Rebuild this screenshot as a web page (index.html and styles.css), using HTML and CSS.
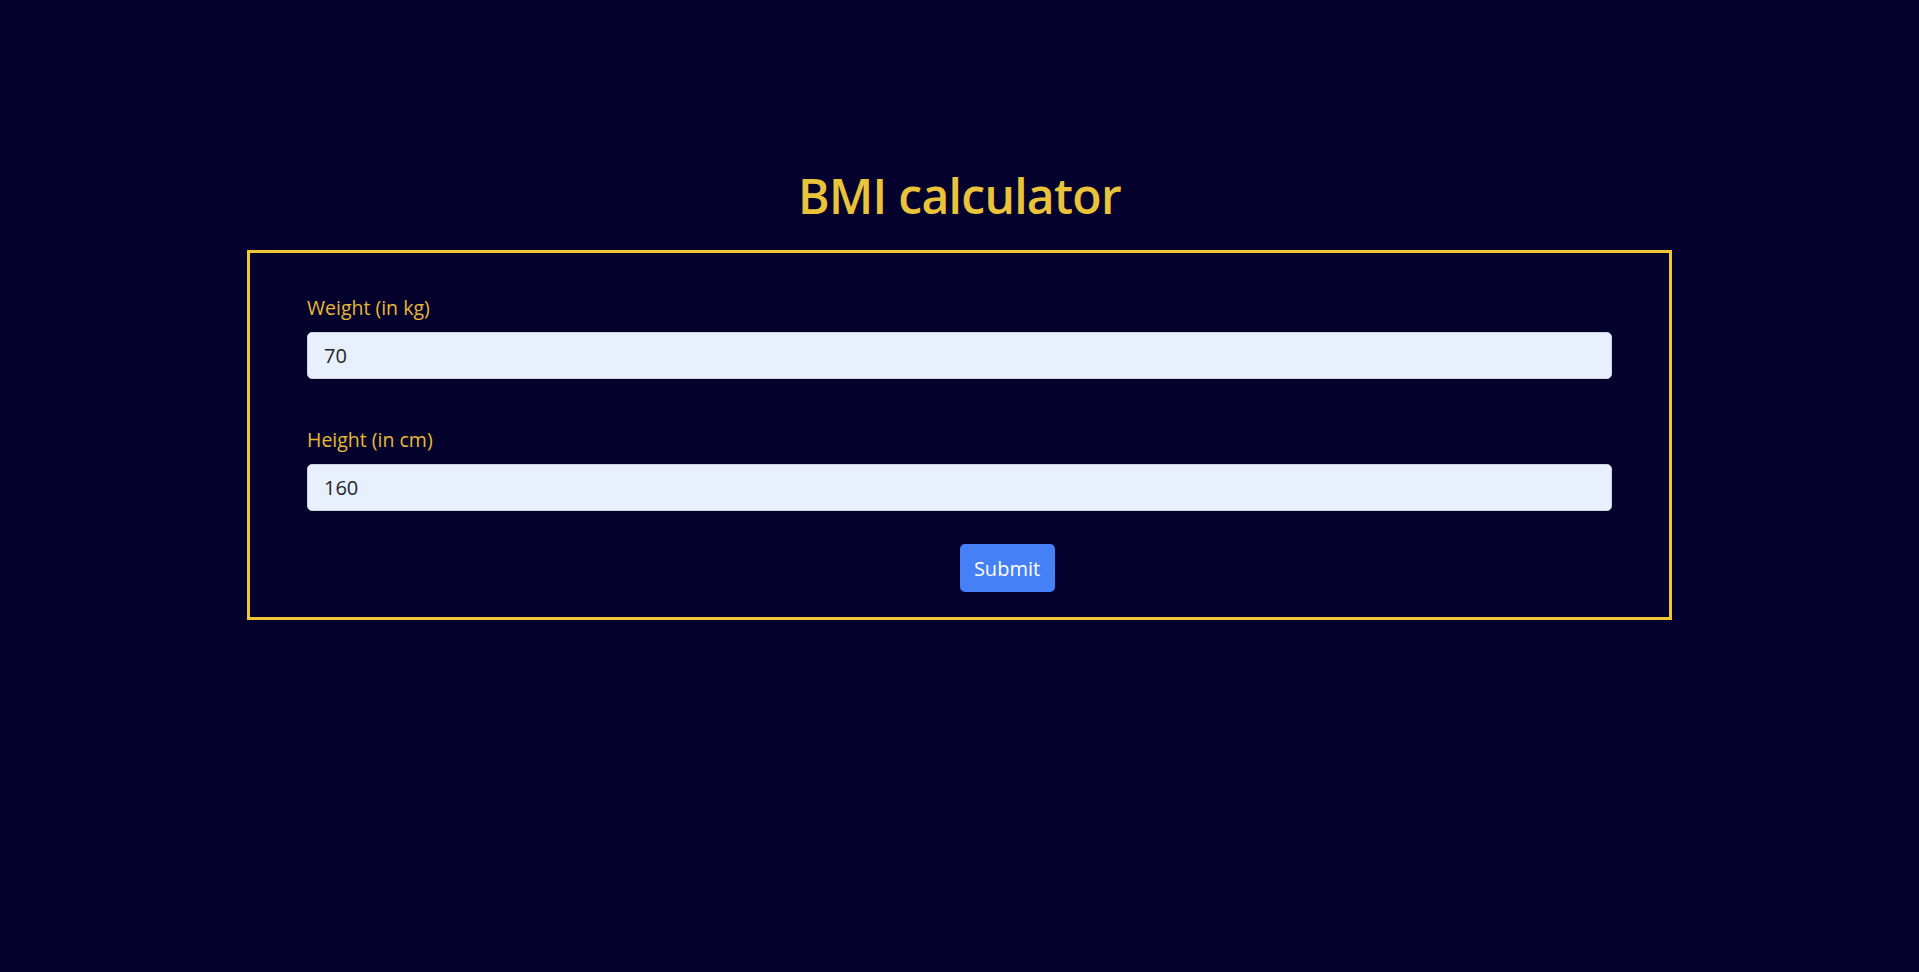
FILE: index.html
```html
<!DOCTYPE html>
<html lang="en">
<head>
<meta charset="utf-8">
<title>BMI calculator</title>
<link rel="stylesheet" href="styles.css">
</head>
<body>
<main class="page">
  <h1 class="title">BMI calculator</h1>
  <form class="card">
    <div class="field">
      <label class="label" for="w">Weight (in kg)</label>
      <input class="input" id="w" type="text" value="70">
    </div>
    <div class="field">
      <label class="label" for="h">Height (in cm)</label>
      <input class="input" id="h" type="text" value="160">
    </div>
    <div class="actions">
      <button class="btn" type="button">Submit</button>
    </div>
  </form>
</main>
</body>
</html>
```
FILE: styles.css
```css
html, body {
  margin: 0;
  padding: 0;
  background: #05032e;
  height: 100%;
}
body {
  font-family: "Open Sans", "Noto Sans", sans-serif;
}
.page {
  padding-top: 166px;
}
.title {
  margin: 0 0 24px;
  text-align: center;
  font-size: 48px;
  line-height: 60px;
  letter-spacing: -0.7px;
  font-weight: 600;
  color: #e9c33a;
}
.card {
  box-sizing: border-box;
  width: 1425px;
  margin: 0 auto;
  border: 3px solid #f2c535;
  padding: 39px 57px 25px;
  display: flex;
  flex-direction: column;
}
.field {
  display: flex;
  flex-direction: column;
  margin-bottom: 45px;
}
.field + .field {
  margin-bottom: 33px;
}
.label {
  font-size: 19.5px;
  line-height: 32px;
  color: #e6b936;
  margin-bottom: 8px;
}
.input {
  box-sizing: border-box;
  height: 47px;
  width: 100%;
  border: 1px solid #ced4da;
  border-radius: 5px;
  background: #e8f0fe;
  padding: 0 16px;
  font-family: inherit;
  font-size: 20px;
  color: #212529;
  outline: none;
}
.actions {
  display: flex;
  padding-left: 50%;
}
.btn {
  box-sizing: border-box;
  height: 48px;
  width: 95px;
  border: none;
  border-radius: 5px;
  background: #4580f6;
  color: #ffffff;
  font-family: inherit;
  font-size: 20px;
  padding: 0;
  cursor: pointer;
}
```
